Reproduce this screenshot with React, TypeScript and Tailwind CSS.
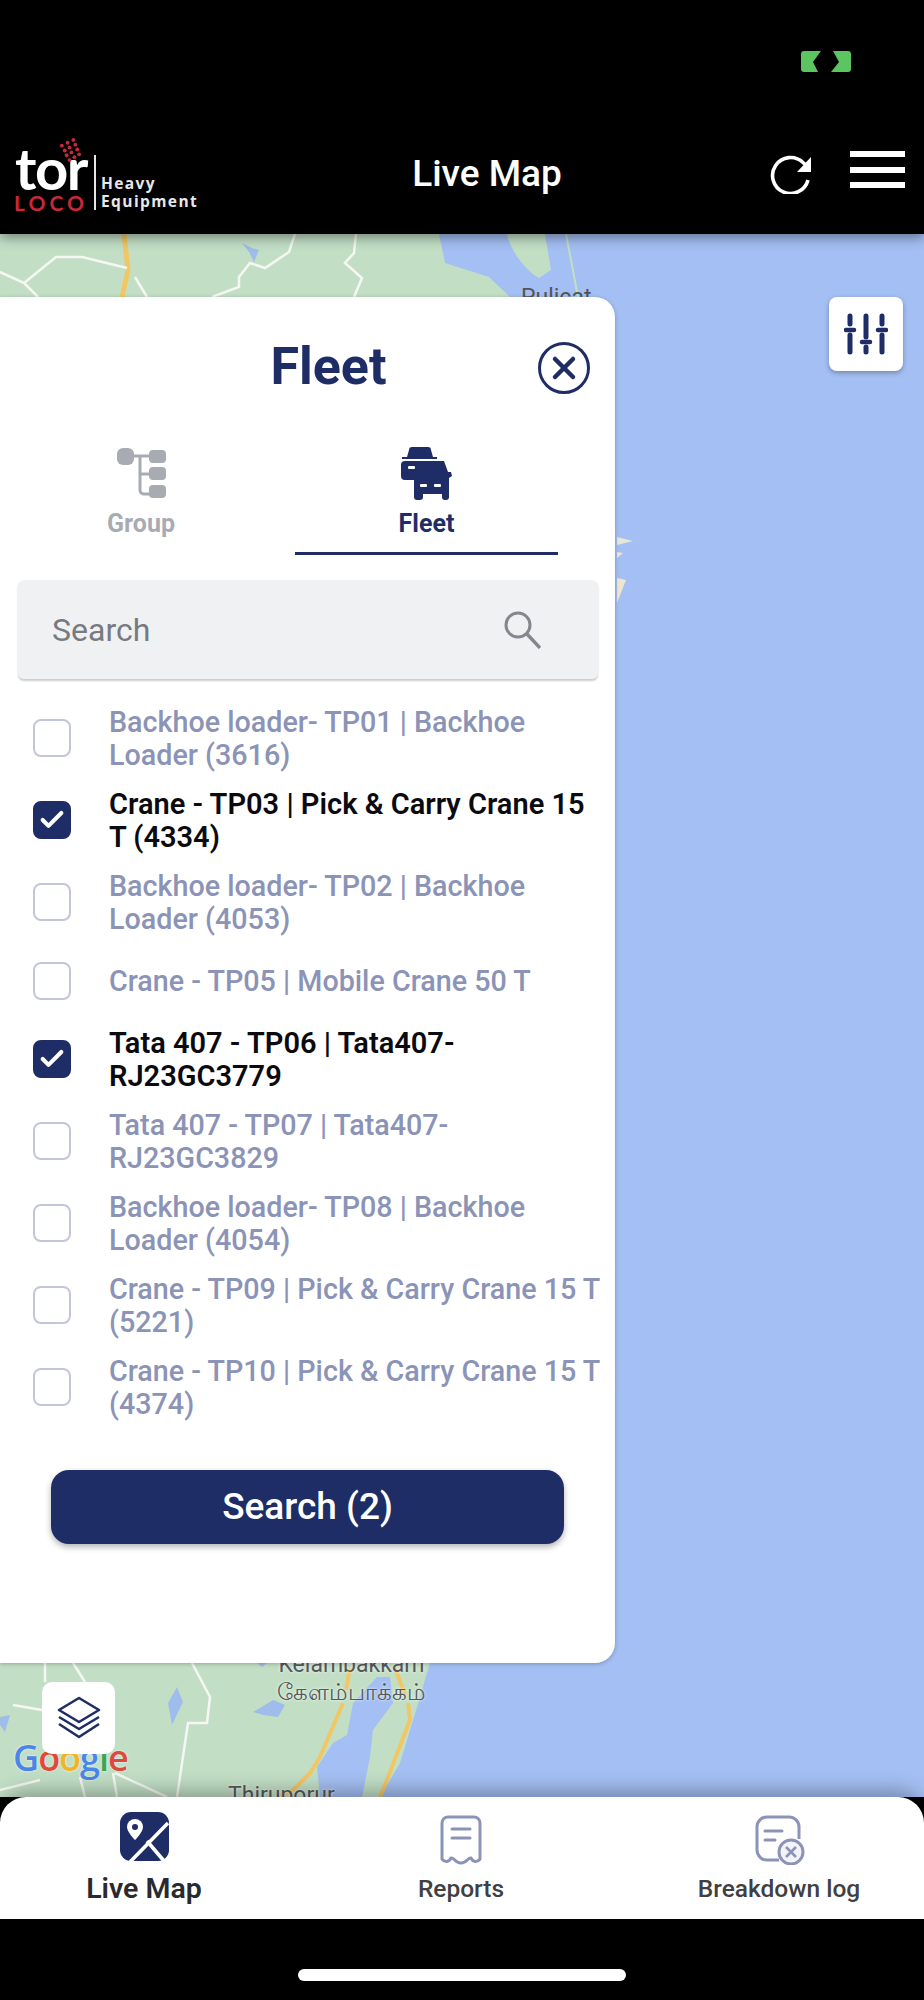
import { Check, X } from "lucide-react";

const navy = "#1f2d66";

interface FleetRow {
  label: string;
  checked?: boolean;
}

const rows: FleetRow[] = [
  { label: "Backhoe loader- TP01 | Backhoe Loader (3616)" },
  { label: "Crane - TP03 | Pick & Carry Crane 15 T (4334)", checked: true },
  { label: "Backhoe loader- TP02 | Backhoe Loader (4053)" },
  { label: "Crane - TP05 | Mobile Crane 50 T" },
  { label: "Tata 407 - TP06 | Tata407-RJ23GC3779", checked: true },
  { label: "Tata 407 - TP07 | Tata407-RJ23GC3829" },
  { label: "Backhoe loader- TP08 | Backhoe Loader (4054)" },
  { label: "Crane - TP09 | Pick & Carry Crane 15 T (5221)" },
  { label: "Crane - TP10 | Pick & Carry Crane 15 T (4374)" },
];

function StatusPill() {
  return (
    <svg width="50" height="21" viewBox="0 0 50 21" aria-hidden="true">
      <rect width="50" height="21" rx="3" fill="#5cc461" />
      <path d="M20 0L12 11L17 21H30L38 11L32 0Z" fill="#000" />
    </svg>
  );
}

function Logo() {
  return (
    <div className="flex items-start text-white">
      <div className="relative flex w-[72px] flex-col items-center">
        <svg className="absolute -top-[7px] left-[43px]" width="25" height="25" viewBox="0 0 26 26" aria-hidden="true">
          {[
            [4, 9], [10, 6], [16, 3], [7, 14], [12, 11], [18, 8], [9, 19], [14, 16], [20, 13], [12, 24], [17, 21], [22, 18],
          ].map(([cx, cy]) => (
            <circle key={`${cx}-${cy}`} cx={cx} cy={cy} r="2" fill="#c8283c" />
          ))}
        </svg>
        <span className="font-['Lato',sans-serif] text-[58px] leading-[47px] font-bold tracking-[-1.5px]">tor</span>
        <span className="font-['Lato',sans-serif] text-[21px] leading-[24px] font-bold tracking-[4px] text-[#c8283c]">
          LOCO
        </span>
      </div>
      <div className="mt-[11px] ml-[7px] h-[55px] w-[2px] bg-white/90" />
      <div className="mt-[30px] ml-[5px] flex flex-col font-['Open_Sans',sans-serif] text-[15.5px] leading-[18px] font-bold tracking-[1.4px] text-[#e8e8e8]">
        <span>Heavy</span>
        <span>Equipment</span>
      </div>
    </div>
  );
}

function Header() {
  return (
    <header className="relative z-10 flex h-[234px] flex-col bg-black shadow-[0_3px_12px_rgba(0,0,0,0.45)]">
      <div className="flex h-[124px] justify-end pt-[51px] pr-[73px]">
        <StatusPill />
      </div>
      <div className="relative flex flex-1 items-start justify-between pr-[19px] pl-[15px]">
        <div className="pt-[20px]">
          <Logo />
        </div>
        <h1 className="absolute top-[28px] left-0 w-[974px] text-center text-[37px] leading-[44px] font-medium text-white">
          Live Map
        </h1>
        <div className="flex items-start gap-[38px]">
          <svg className="mt-[29px]" width="42" height="41" viewBox="0 0 42 41" fill="none" aria-hidden="true">
            <path d="M38 27a18 18 0 1 1-5-17.5L38 14" stroke="#fff" strokeWidth="3.6" />
            <path d="M41 4v15H27z" fill="#fff" />
          </svg>
          <div className="mt-[27px] flex h-[37px] w-[55px] flex-col justify-between">
            <div className="h-[6px] bg-white" />
            <div className="h-[6px] bg-white" />
            <div className="h-[6px] bg-white" />
          </div>
        </div>
      </div>
    </header>
  );
}

// Map tiles behind the panel, only the parts around the panel are visible
function MapBackdrop() {
  return (
    <svg className="absolute inset-0 h-full w-full" viewBox="0 234 924 1563" preserveAspectRatio="none" aria-hidden="true">
      <rect x="0" y="234" width="924" height="1563" fill="#a4bff3" />
      <path d="M0 234H439L445 263L489 277L510 297H500V1663H430L417 1707L400 1763L380 1797H0Z" fill="#c2dfc6" />
      <path d="M507 234H545L551 270L539 278C525 270 510 250 507 234Z" fill="#c2dfc6" />
      <path d="M566 234L578 297" stroke="#c2dfc6" strokeWidth="2" fill="none" />
      <path d="M617 537L633 541L617 545Z" fill="#e6e8d4" />
      <path d="M617 552L623 553L617 558Z" fill="#efe6cf" />
      <path d="M617 578L626 580L617 603Z" fill="#efe6cf" />
      <path d="M124 234L128 270L122 297" stroke="#f1c766" strokeWidth="5" fill="none" />
      <path d="M0 272L24 283L56 257H82L127 268M24 283L38 297M135 277L147 297" stroke="#f5f7f2" strokeWidth="2.5" fill="none" />
      <path d="M295 234L289 252L265 268L250 263L239 277V287L212 297M356 234L354 253L345 263L362 278L354 297" stroke="#f5f7f2" strokeWidth="2.5" fill="none" />
      <path d="M242 243L252 248L259 250L254 262L249 252Z" fill="#9fbdea" />
      {/* bottom of the map */}
      <path d="M353 1703L377 1677H390L393 1703L373 1730L370 1757L362 1797H320L317 1767L333 1743L347 1735Z" fill="#a4bff3" />
      <path d="M343 1703L320 1757L310 1773L293 1790L280 1797M408 1703L410 1720L383 1790L380 1797M350 1668L346 1690M395 1668L405 1695" stroke="#f1c766" strokeWidth="4" fill="none" />
      <path d="M73 1663L85 1682M45 1663V1682M13 1705L42 1710M192 1663L210 1697L207 1723H188L177 1797M115 1773L167 1797M80 1777L85 1797M113 1773L117 1797M0 1790L40 1780" stroke="#f5f7f2" strokeWidth="2.5" fill="none" />
      <path d="M168 1703L177 1687L183 1702L172 1725Z" fill="#9fbdea" />
      <path d="M253 1712L273 1700L285 1705L278 1717L263 1715Z" fill="#9fbdea" />
      <path d="M0 1717L10 1715L5 1732L0 1725Z" fill="#9fbdea" />
      <path d="M257 1663H267L262 1667Z" fill="#9fbdea" />
    </svg>
  );
}

function FleetPanel() {
  return (
    <section className="absolute top-[63px] left-0 flex h-[1366px] w-[615px] flex-col rounded-r-[20px] bg-white pl-[18px] shadow-[0_1px_4px_rgba(0,0,0,0.25)]">
      <div className="relative flex h-[147px] items-start justify-center pl-[24px]">
        <h2 className="pt-[42px] text-[52px] leading-[56px] font-bold" style={{ color: navy }}>
          Fleet
        </h2>
        <button className="absolute top-[45px] right-[25px] flex h-[52px] w-[52px] items-center justify-center rounded-full border-[3px] border-[#1f2d66] text-[#1f2d66]">
          <X size={36} strokeWidth={3} />
        </button>
      </div>

      {/* tabs */}
      <div className="flex h-[111px]">
        <div className="flex w-[246px] flex-col items-center pt-[4px]">
          <svg width="49" height="50" viewBox="0 0 49 50" aria-hidden="true">
            <path d="M23 8V42a4 4 0 0 0 4 4H34M10 8H34M23 26H34" stroke="#a9abb2" strokeWidth="3" fill="none" />
            <rect x="0" y="0" width="17" height="17" rx="6" fill="#a9abb2" />
            <rect x="32" y="2" width="17" height="13" rx="4" fill="#a9abb2" />
            <rect x="32" y="19" width="17" height="13" rx="4" fill="#a9abb2" />
            <rect x="32" y="37" width="17" height="13" rx="4" fill="#a9abb2" />
          </svg>
          <span className="mt-[12px] text-[25px] leading-[28px] font-bold text-[#a9abb2]">Group</span>
        </div>
        <div className="ml-[31px] flex w-[263px] flex-col items-center border-b-[3px] border-[#1f2d66] pt-[3px]">
          <svg width="51" height="53" viewBox="0 0 51 53" aria-hidden="true">
            <path d="M6 10L8 3a3 3 0 0 1 3-3H27a3 3 0 0 1 3 3L32 10H36V12H1V10Z" fill={navy} />
            <path d="M4 14H30V33H4a4 4 0 0 1-4-4V18a4 4 0 0 1 4-4Z" fill={navy} />
            <path d="M17 14H43L47 25H50L51 29L48 31V50a3 3 0 0 1-3 3H44a3 3 0 0 1-3-3V47H22V50a3 3 0 0 1-3 3H16a3 3 0 0 1-3-3V31L11 29V25L14 24Z" fill={navy} />
            <rect x="7" y="19" width="7" height="3" rx="1" fill="#fff" />
            <rect x="19" y="37" width="7" height="3" rx="1" fill="#fff" />
            <rect x="33" y="37" width="7" height="3" rx="1" fill="#fff" />
          </svg>
          <span className="mt-[10px] text-[25px] leading-[28px] font-bold" style={{ color: navy }}>
            Fleet
          </span>
        </div>
      </div>

      {/* search box */}
      <div className="mt-[25px] mr-[17px] flex h-[99px] items-center justify-between rounded-[6px] bg-[#f0f1f3] pr-[57px] pl-[34px] shadow-[0_2px_2px_rgba(0,0,0,0.2)]">
        <span className="text-[32px] font-normal text-[#777a7f]">Search</span>
        <svg width="37" height="38" viewBox="0 0 37 38" fill="none" stroke="#85878c" strokeWidth="3" aria-hidden="true">
          <circle cx="14" cy="14" r="12" />
          <path d="M23 23L36 37" strokeWidth="3.4" />
        </svg>
      </div>

      {/* list */}
      <ul className="mt-[18px] flex flex-col pl-[15px]">
        {rows.map((row) => (
          <li key={row.label} className="flex min-h-[75px] items-center py-[8px]">
            <span
              className={`flex h-[38px] w-[38px] shrink-0 items-center justify-center rounded-[8px] border-2 ${
                row.checked ? "border-[#1f2d66] bg-[#1f2d66]" : "border-[#c3c6da] bg-white"
              }`}
            >
              {row.checked && <Check size={28} strokeWidth={3.5} color="#fff" />}
            </span>
            <span
              className={`ml-[38px] shrink-0 translate-y-[1px] leading-[33px] ${
                row.checked
                  ? "w-[490px] text-[29px] font-semibold text-[#0b0b0f]"
                  : "w-[502px] text-[28.7px] font-medium text-[#8b93b6]"
              }`}
            >
              {row.label}
            </span>
          </li>
        ))}
      </ul>

      <button className="mt-[42px] ml-[33px] h-[74px] w-[513px] rounded-[18px] bg-[#1f2d66] text-[37px] font-medium text-white shadow-[0_3px_6px_rgba(0,0,0,0.3)]">
        Search (2)
      </button>
    </section>
  );
}

function BottomNav() {
  return (
    <nav className="relative z-10 grid h-[122px] grid-cols-[288px_346px_290px] rounded-t-[26px] bg-white shadow-[0_-6px_20px_rgba(0,0,0,0.3)]">
      <div className="flex flex-col items-center pt-[15px]">
        <svg width="49" height="49" viewBox="0 0 49 49" aria-hidden="true">
          <rect width="49" height="49" rx="11" fill={navy} />
          <path d="M48 11L10 50M27 29L44 49" stroke="#fff" strokeWidth="3.6" fill="none" />
          <path d="M15 7a8 8 0 0 1 8 8c0 5-8 13-8 13s-8-8-8-13a8 8 0 0 1 8-8z" fill="#fff" />
          <circle cx="15" cy="15" r="3" fill={navy} />
        </svg>
        <span className="mt-[9px] text-[28.5px] leading-[38px] font-semibold text-[#2a2a2e]">Live Map</span>
      </div>
      <div className="flex flex-col items-center pt-[18px]">
        <svg width="42" height="50" viewBox="0 0 42 50" fill="none" stroke="#8b93b6" strokeWidth="3" aria-hidden="true">
          <path d="M2 44V8a6 6 0 0 1 6-6H34a6 6 0 0 1 6 6V44c-3 4-7 3-9-1-3-1-4 5-10 5s-7-6-10-5c-2 4-6 5-9 1z" strokeLinejoin="round" />
          <path d="M12 14H30M12 23H30" strokeLinecap="round" />
        </svg>
        <span className="mt-[6px] text-[24.5px] leading-[36px] font-medium text-[#3f3f44]">Reports</span>
      </div>
      <div className="flex flex-col items-center pt-[18px]">
        <svg className="ml-[2px]" width="50" height="50" viewBox="0 0 50 50" fill="none" stroke="#8b93b6" strokeWidth="3" aria-hidden="true">
          <path d="M24 45H12A10 10 0 0 1 2 35V12A10 10 0 0 1 12 2H34A10 10 0 0 1 44 12V24" />
          <path d="M10 16H27M10 25H20" strokeLinecap="round" />
          <circle cx="36" cy="37" r="12" fill="#f3f3f7" />
          <path d="M31 32L41 42M41 32L31 42" strokeWidth="2.6" />
        </svg>
        <span className="mt-[6px] text-[24.5px] leading-[36px] font-medium text-[#3f3f44]">Breakdown log</span>
      </div>
    </nav>
  );
}

export default function App() {
  return (
    <div className="flex h-[2000px] w-[924px] flex-col overflow-hidden bg-black font-['Roboto',sans-serif]">
      <Header />
      <main className="relative flex-1">
        <MapBackdrop />
        {/* map labels run under the panel and the nav, as they do on a real map */}
        <span className="absolute top-[50px] left-[521px] text-[23px] leading-[28px] text-[#555]">Pulicat</span>
        <div className="absolute top-[1417px] left-[277px] text-center text-[23px] leading-[27px] text-[#55595a] [text-shadow:0_0_3px_#fff]">
          <div>Kelambakkam</div>
          <div className="font-['Noto_Sans',sans-serif] text-[23px]">கேளம்பாக்கம்</div>
        </div>
        <span className="absolute top-[1548px] left-[228px] text-[23px] leading-[28px] text-[#55595a] [text-shadow:0_0_3px_#fff]">
          Thiruporur
        </span>
        <span className="absolute top-[1500px] left-[13px] font-['Open_Sans',sans-serif] text-[36px] leading-[48px] font-semibold tracking-[-1px] [text-shadow:0_0_2px_#fff]">
          <span className="text-[#4a86e8]">G</span>
          <span className="text-[#e0483c]">o</span>
          <span className="text-[#f0b429]">o</span>
          <span className="text-[#4a86e8]">g</span>
          <span className="text-[#3aa655]">l</span>
          <span className="text-[#e0483c]">e</span>
        </span>
        <FleetPanel />
        <button className="absolute top-[63px] right-[21px] flex h-[74px] w-[74px] items-center justify-center rounded-[8px] bg-white shadow-[0_2px_5px_rgba(0,0,0,0.3)]">
          <svg width="44" height="42" viewBox="0 0 44 42" fill="none" stroke={navy} strokeWidth="5" strokeLinecap="round" aria-hidden="true">
            <path d="M6 3V11M6 22V39M22 3V24M22 34V39M38 3V11M38 22V39" />
            <path d="M2 17H10M18 29H26M34 17H42" strokeWidth="4.5" />
          </svg>
        </button>
        <button className="absolute top-[1448px] left-[42px] flex h-[72px] w-[73px] items-center justify-center rounded-[10px] bg-white">
          <svg width="44" height="44" viewBox="0 0 44 44" fill="none" stroke={navy} strokeWidth="2.6" strokeLinejoin="round" aria-hidden="true">
            <path d="M22 2L42 14L22 26L2 14Z" />
            <path d="M2 21L22 33L42 21M2 28L22 41L42 28" />
          </svg>
        </button>
      </main>
      <BottomNav />
      <div className="flex h-[81px] items-start justify-center pt-[50px]">
        <div className="h-[12px] w-[328px] rounded-full bg-white" />
      </div>
    </div>
  );
}
